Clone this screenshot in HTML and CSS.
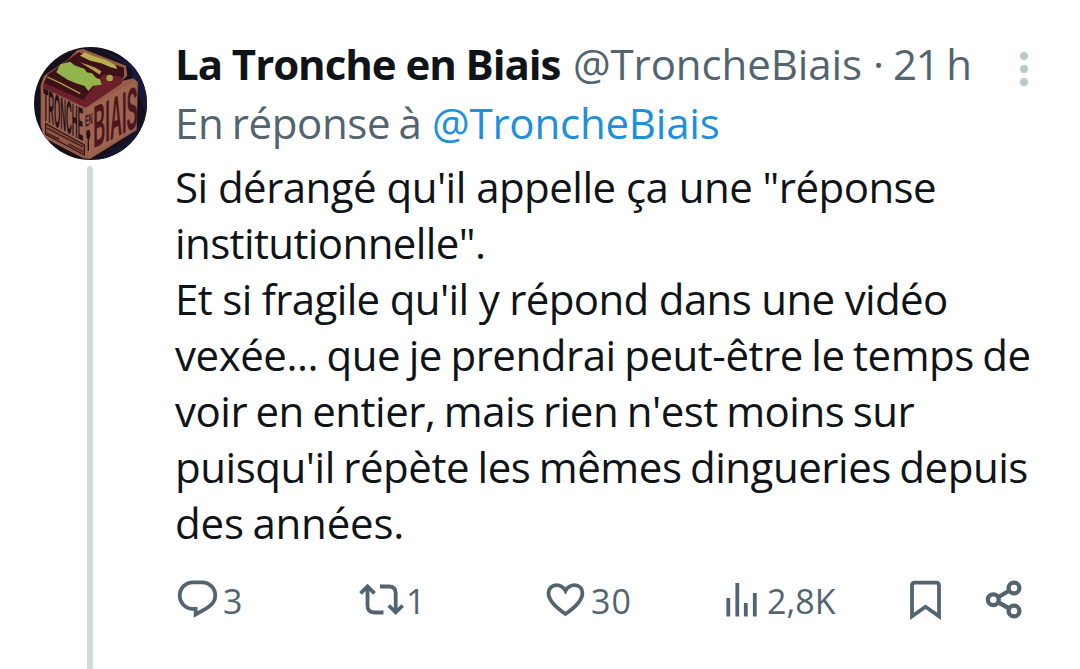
FILE: index.html
```html
<!DOCTYPE html>
<html lang="fr">

<head>
  <meta charset="utf-8">
  <meta name="viewport" content="width=device-width, initial-scale=1">
  <title>La Tronche en Biais</title>
  <link rel="stylesheet" href="styles.css">
</head>

<body>

<article class="tweet">

  <div class="side">
    <svg class="avatar" viewBox="42 36 339 339">
      <clipPath id="round"><circle cx="211.5" cy="205.5" r="169.5"/></clipPath>
      <g clip-path="url(#round)">
        <rect x="42" y="36" width="339" height="339" fill="#160f1c"/>
        <path d="M230 36L381 110V250L330 100Z" fill="#181a3b"/>
        <path d="M320 320L381 240V375H230Z" fill="#14152f"/>
        <!-- cube outline -->
        <path d="M62 150L72 122L145 72L172 45L190 42L318 92L322 122L305 138L340 130L354 142L350 285L210 372L190 370L72 308L62 270Z" fill="#955c48"/>
        <!-- lid -->
        <path d="M72 142L84 118L176 52L312 98L312 124L298 148L197 216L70 156Z" fill="#3e1119"/>
        <path d="M72 144L192 196L306 128L306 145L197 218L70 158Z" fill="#6b202a"/>
        <path d="M250 118L306 126L300 146L197 216L190 194Z" fill="#6b202a"/>
        <path d="M109 112L117 95L123 87L151 80L163 91L194 102L200 112L216 115L228 128L240 133L245 149L219 152L205 168L194 153L168 145L143 134L122 121Z" fill="#91b44b"/>
        <path d="M180 62L194 52L222 64L256 74L286 90L292 102L270 96L244 85L211 77Z" fill="#b6b14c"/>
        <path d="M180 82L205 90L226 98L244 109L239 119L218 105Z" fill="#b59c50"/>
        <circle cx="269" cy="129" r="10" fill="#a5a34b"/>
        <path d="M82 126L123 145L181 176" fill="none" stroke="#a8a04c" stroke-width="4"/>
        <!-- faces -->
        <path d="M67 160L193 221L198 364L68 299Z" fill="#9c6350"/>
        <path d="M199 219L302 161L346 136L347 281L204 364Z" fill="#9d6450"/>
        <path d="M77 266L193 330V360L77 298Z" fill="#8f5843" stroke="#30151c" stroke-width="4"/>
        <path d="M82 280L188 335M80 294L118 313M145 327L190 350" stroke="#4a2023" stroke-width="5"/>
        <ellipse cx="205" cy="298" rx="6" ry="14" fill="#260f18"/>
        <path d="M205 305V347" stroke="#260f18" stroke-width="4"/>
      </g>
      <text class="logo-text" transform="translate(70 255) skewY(28)" font-size="140" textLength="119" lengthAdjust="spacingAndGlyphs" fill="#251119">TRONCHE</text>
      <text class="logo-text" transform="translate(220 340) skewY(-26)" font-size="178" textLength="133" lengthAdjust="spacingAndGlyphs" fill="#4d151f">BIAIS</text>
      <text class="logo-text" transform="translate(196 276) skewY(-26)" font-size="48" textLength="22" lengthAdjust="spacingAndGlyphs" fill="#381019">EN</text>
    </svg>
    <div class="thread-line"></div>
  </div>

  <div class="content">

    <header class="head">
      <span class="name">La Tronche en Biais</span>
      <span class="handle">@TroncheBiais</span>
      <span class="dot">·</span>
      <span class="time">21 h</span>
      <svg class="more" width="14" height="36" viewBox="0 0 14 36">
        <circle cx="7" cy="5" r="4"/>
        <circle cx="7" cy="18" r="4"/>
        <circle cx="7" cy="31" r="4"/>
      </svg>
    </header>

    <div class="reply"><span class="reply-to">En réponse à</span> <a class="mention">@TroncheBiais</a></div>

    <p class="text">
      <span class="line l1">Si dérangé qu'il appelle ça une "réponse</span>
      <span class="line l2">institutionnelle".</span>
      <span class="line l3">Et si fragile qu'il y répond dans une vidéo</span>
      <span class="line l4">vexée... que je prendrai peut-être le temps de</span>
      <span class="line l5">voir en entier, mais rien n'est moins sur</span>
      <span class="line l6">puisqu'il répète les mêmes dingueries depuis</span>
      <span class="line l7">des années.</span>
    </p>

    <footer class="actions">
      <div class="action">
        <svg width="47" height="48" viewBox="176 576 47 48">
          <path d="M193 582.3H202A13.3 13.3 0 0 1 215.3 595.6C215.3 602 211 605.8 206 608.6L195.6 614.4V608.9H193A13.3 13.3 0 0 1 193 582.3Z"/>
        </svg>
        <span>3</span>
      </div>
      <div class="action">
        <svg width="48" height="48" viewBox="358 576 48 48">
          <path d="M360.5 593.3L367.5 586.5L374.5 593.3M367.5 587V605.5Q367.5 612.5 374.5 612.5H383.5M380 586.5H389Q395.7 586.5 395.7 593.3V612M388.7 605.5L395.7 612.3L402.7 605.5"/>
        </svg>
        <span>1</span>
      </div>
      <div class="action">
        <svg width="46" height="48" viewBox="545 576 46 48">
          <path d="M565.5 614C556 607.5 548.5 600.5 548.5 593.3C548.5 588.5 552 585.2 556.6 585.2C560.5 585.2 563.5 587.3 565.5 590.8C567.5 587.3 570.5 585.2 574.4 585.2C579 585.2 582.4 588.5 582.4 593.3C582.4 600.5 575 607.5 565.5 614Z"/>
        </svg>
        <span class="likes">30</span>
      </div>
      <div class="action">
        <svg width="42" height="48" viewBox="725 576 42 48">
          <path d="M728.3 598V616.5M737.3 583V616.5M745.8 603V616.5M754.8 593V616.5"/>
        </svg>
        <span>2,8K</span>
      </div>
      <div class="action">
        <svg width="36" height="48" viewBox="908 576 36 48">
          <path d="M912 616.3V585.5Q912 582.7 914.8 582.7H936.2Q939 582.7 939 585.5V616.3L925.5 606.8Z"/>
        </svg>
      </div>
      <div class="action">
        <svg class="share" width="40" height="48" viewBox="984 576 40 48">
          <path d="M998.5 597L1008.5 591M998.5 602.5L1008.5 608"/>
          <circle cx="993.3" cy="599.7" r="5.4"/>
          <circle cx="1014" cy="588" r="5.4"/>
          <circle cx="1014" cy="611" r="5.4"/>
        </svg>
      </div>
    </footer>

  </div>

</article>

</body></html>
```
FILE: styles.css
```css
body {
  margin: 0;
  background: #fff;
  color: #0f1419;
  font-family: "Open Sans", "Noto Sans", sans-serif;
  font-size: 42px;
  line-height: 56px;
  overflow: hidden;
}

.tweet {
  display: flex;
  height: 669px;
  box-sizing: border-box;
  padding: 36px 49px 0 34px;
}

/* avatar + thread */
.side {
  display: flex;
  flex-direction: column;
  align-items: center;
  width: 113px;
  margin-right: 28px;
  padding-top: 11px;
}

.avatar {
  flex: none;
  width: 113px;
  height: 113px;
  overflow: visible;
}

.logo-text {
  font-family: "Liberation Sans", sans-serif;
  font-weight: bold;
}

.thread-line {
  flex: 1;
  width: 6px;
  margin-top: 6px;
  margin-right: 1px;
  border-radius: 3px 3px 0 0;
  background: #cfd9de;
}

.content {
  flex: 1;
  min-width: 0;
  white-space: nowrap;
  word-spacing: -2px;
}

.head {
  display: flex;
  height: 59px;
  color: #536471;
}

.name {
  width: 398px;
  color: #0f1419;
  font-weight: 700;
  letter-spacing: -1.05px;
  word-spacing: 0;
}

.handle {
  width: 300px;
  letter-spacing: -0.1px;
}

.dot {
  width: 20px;
}

.time {
  letter-spacing: -1.2px;
}

.more {
  margin: 15px 0 0 auto;
  fill: #b9cacf;
}

.reply {
  display: flex;
  height: 64px;
  color: #536471;
}

.reply-to {
  width: 257px;
  letter-spacing: -0.4px;
}

.mention {
  color: #1d90dc;
  letter-spacing: -0.2px;
}

.text {
  margin: 0;
}

.line {
  display: block;
}

.l1 { letter-spacing: -0.53px; word-spacing: 0; }
.l2 { letter-spacing: -0.6px; }
.l3 { letter-spacing: -0.65px; word-spacing: 0; }
.l4 { letter-spacing: -0.46px; }
.l5 { letter-spacing: -0.49px; }
.l6 { letter-spacing: -0.46px; }
.l7 { letter-spacing: -0.2px; }

/* counters and icons */
.actions {
  display: grid;
  grid-template-columns: 182px 187px 180px 183px 76px 40px;
  height: 48px;
  margin-top: 25px;
  margin-left: 1px;
  color: #536471;
  font-size: 34px;
  line-height: 50px;
}

.likes {
  letter-spacing: 1px;
}

.action {
  display: flex;
}

.action svg {
  flex: none;
  fill: none;
  stroke: #536471;
  stroke-width: 3.8;
}

.action .share {
  stroke-width: 4.3;
}
```
